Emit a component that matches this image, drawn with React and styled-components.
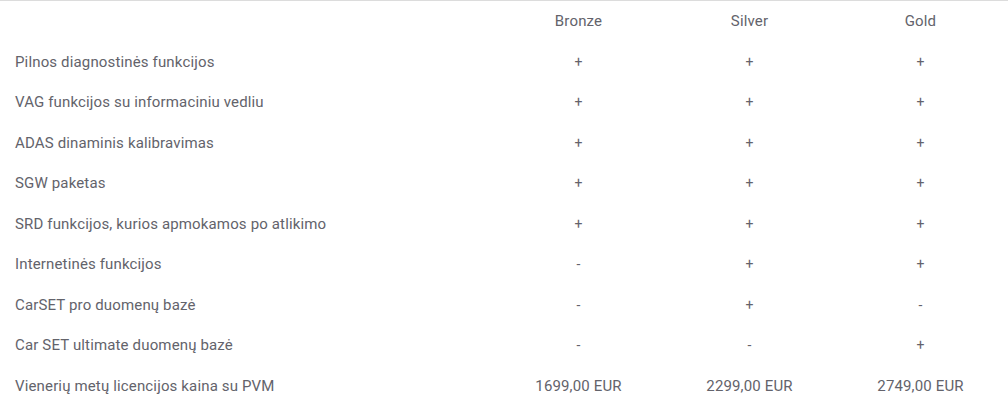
import React from "react";
import styled, { createGlobalStyle } from "styled-components";

const GlobalStyle = createGlobalStyle`
  body {
    margin: 0;
    background: #fff;
    font-family: Roboto, "Liberation Sans", sans-serif;
  }
`;

const Table = styled.div`
  width: 1008px;
  border-top: 1px solid #dcdcdc;
  display: grid;
  grid-template-columns: 493px 171px 171px 171px;
  grid-auto-rows: 40.5px;
  color: #63636b;
  font-size: 15px;
  letter-spacing: 0.15px;
`;

const Cell = styled.div`
  display: flex;
  align-items: center;
  justify-content: ${(p) => (p.$label ? "flex-start" : "center")};
  padding-left: ${(p) => (p.$label ? "15px" : "0")};
  font-size: ${(p) => (p.$mark ? "14px" : "15px")};
  white-space: nowrap;
`;

const rows = [
  ["Pilnos diagnostinės funkcijos", "+", "+", "+"],
  ["VAG funkcijos su informaciniu vedliu", "+", "+", "+"],
  ["ADAS dinaminis kalibravimas", "+", "+", "+"],
  ["SGW paketas", "+", "+", "+"],
  ["SRD funkcijos, kurios apmokamos po atlikimo", "+", "+", "+"],
  ["Internetinės funkcijos", "-", "+", "+"],
  ["CarSET pro duomenų bazė", "-", "+", "-"],
  ["Car SET ultimate duomenų bazė", "-", "-", "+"],
  ["Vienerių metų licencijos kaina su PVM", "1699,00 EUR", "2299,00 EUR", "2749,00 EUR"],
];

export default function App() {
  return (
    <>
      <GlobalStyle />
      <Table>
        <Cell $label />
        <Cell>Bronze</Cell>
        <Cell>Silver</Cell>
        <Cell>Gold</Cell>
        {rows.map(([label, ...vals]) => (
          <React.Fragment key={label}>
            <Cell $label>{label}</Cell>
            {vals.map((v, i) => (
              <Cell key={i} $mark={v.length === 1}>
                {v}
              </Cell>
            ))}
          </React.Fragment>
        ))}
      </Table>
    </>
  );
}
